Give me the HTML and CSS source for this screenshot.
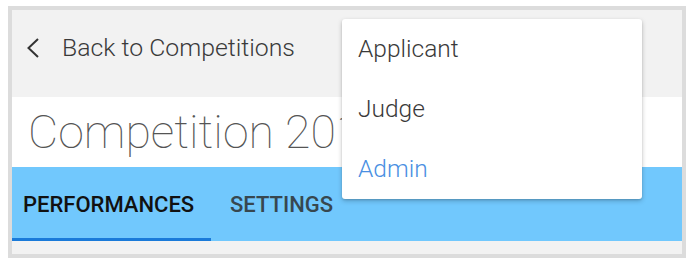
FILE: index.html
```html
<!doctype html>
<html>
 <head>
  <meta charset="UTF-8">
  <title>Competition</title>
  <link rel="stylesheet" href="styles.css">
 </head>
 <body>
    <!--S. page-->
    <div id="page">
        <div class="p_head">
            <a class="back" href="#">
                <svg class="back_icon" width="12" height="20" viewBox="0 0 12 20"><polyline points="11,1 1.5,10 11,19" fill="none" stroke="#333" stroke-width="2"/></svg>
                <span>Back to Competitions</span>
            </a>
        </div>
        <h1 class="p_title">Competition 2018</h1>
        <ul class="p_tabs">
            <li class="on">Performances</li>
            <li>Settings</li>
        </ul>
        <div class="p_foot"></div>

        <!--role menu-->
        <ul class="role_menu">
            <li>Applicant</li>
            <li>Judge</li>
            <li class="on">Admin</li>
        </ul>
    </div>
    <!--E. page-->
 </body>
</html>
```

FILE: styles.css
```css
*{padding:0;margin:0;box-sizing:border-box;}
body{font-family:Roboto,"Liberation Sans",sans-serif;color:#424242;background:#fff;}
/*S. page*/
#page{position:relative;width:678px;height:252px;margin:6px 0 0 8px;border:4px solid #dcdcdc;background:#f2f2f2;display:flex;flex-direction:column;}
#page .p_head{height:87px;padding:24px 0 0 15px;}
#page .back{display:flex;align-items:center;gap:23px;text-decoration:none;color:#3a3a3a;font-size:24.8px;font-weight:300;line-height:28px;}
#page .back_icon{display:block;}
#page .p_title{height:70px;background:#fff;font-size:46.5px;font-weight:100;line-height:70px;color:#555;padding-left:16px;white-space:nowrap;overflow:hidden;}
#page .p_tabs{height:74px;background:#71c8fd;display:flex;list-style:none;}
#page .p_tabs li{display:flex;align-items:center;padding:3px 19px 0;font-size:22px;font-weight:500;text-transform:uppercase;color:#37474f;border-bottom:3px solid transparent;}
#page .p_tabs li.on{color:#111;border-bottom-color:#1a7ad9;width:199px;padding-left:11px;}
#page .p_foot{flex:1;}
/*role menu*/
#page .role_menu{position:absolute;left:330px;top:9px;width:300px;list-style:none;background:#fff;border-radius:3px;box-shadow:0 2px 5px rgba(0,0,0,.22),0 1px 2px rgba(0,0,0,.12);}
#page .role_menu li{height:60px;line-height:60px;padding-left:16px;font-size:24.5px;font-weight:300;color:#3a3a3a;}
#page .role_menu li.on{color:#4a8fe2;}
/*E. page*/
```
